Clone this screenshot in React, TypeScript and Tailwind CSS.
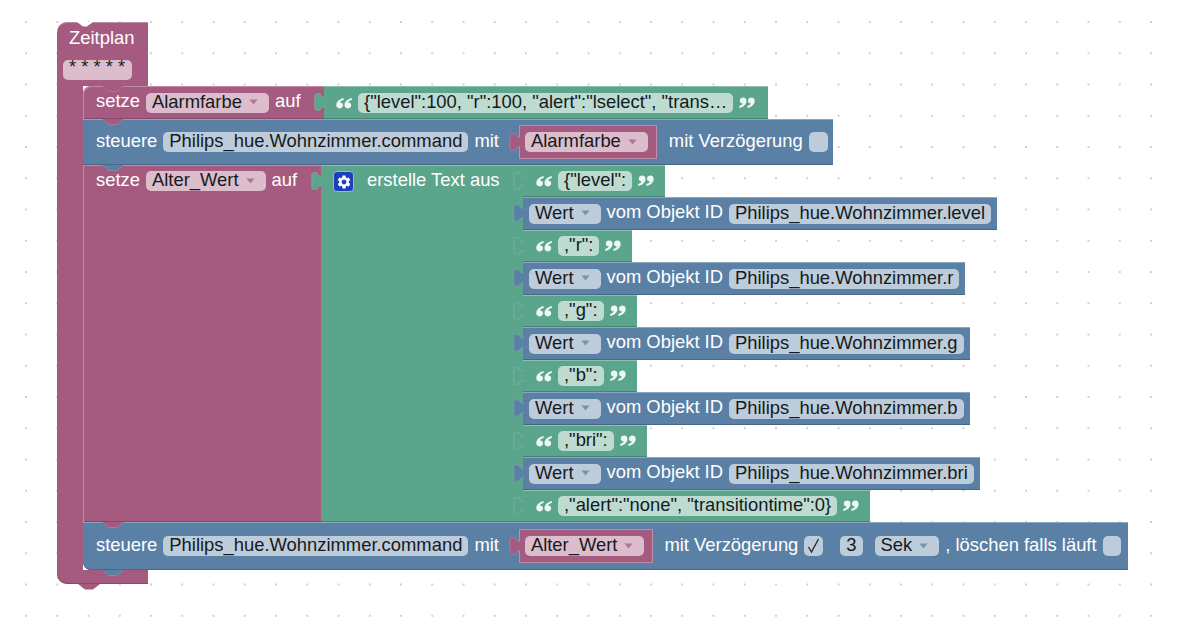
import { MdSettings } from "react-icons/md";
import type { ReactNode } from "react";

type Tone = "pink" | "blue" | "green";
const hex: Record<Tone, { fill: string; light: string; dark: string }> = {
  pink: { fill: "#a55b80", light: "#c08ca6", dark: "#844966" },
  blue: { fill: "#5b80a5", light: "#8ca6c0", dark: "#496684" },
  green: { fill: "#5ba58c", light: "#8cc0af", dark: "#498470" },
};
const blockClass: Record<Tone, string> = {
  pink: "bg-[#a55b80] shadow-[inset_1px_1px_0_#c08ca6,inset_0_-1px_0_#844966]",
  blue: "bg-[#5b80a5] shadow-[inset_0_1px_0_#8ca6c0,inset_0_-1px_0_#496684]",
  green: "bg-[#5ba58c] shadow-[inset_0_1px_0_#8cc0af,inset_0_-1px_0_#498470]",
};
const fieldClass: Record<Tone, string> = {
  pink: "bg-[#dbbdcc]",
  blue: "bg-[#bdccdb]",
  green: "bg-[#bddbd1]",
};

function Field({
  tone,
  arrow,
  children,
  className = "",
}: {
  tone: Tone;
  arrow?: boolean;
  children?: ReactNode;
  className?: string;
}) {
  return (
    <span
      className={`flex h-[20px] shrink-0 items-center whitespace-pre rounded-[5px] pb-[1px] pl-[6px] pr-[6px] text-[#151a20] ${fieldClass[tone]} ${className}`}
    >
      {children}
      {arrow && (
        <svg width="9" height="6" viewBox="0 0 9 6" className="ml-[7px] mr-[5px]">
          <path d="M0.5 0.5H8.5L4.5 5.5Z" fill={hex[tone].fill} opacity="0.75" />
        </svg>
      )}
    </span>
  );
}

function Label({ children, className = "" }: { children: ReactNode; className?: string }) {
  return <span className={`shrink-0 whitespace-pre pb-[2px] text-white ${className}`}>{children}</span>;
}

function Notch({ tone, className = "" }: { tone: Tone; className?: string }) {
  return (
    <svg
      width="22"
      height="7"
      viewBox="0 0 22 7"
      className={`absolute left-[19px] top-0 z-10 ${className}`}
    >
      <path d="M0 0 L7 5.5 H15 L22 0 Z" fill={hex[tone].fill} />
      <path d="M1 0.5 L7 5.5 H15 L21 0.5" fill="none" stroke={hex[tone].light} strokeWidth="0.8" opacity="0.6" />
    </svg>
  );
}

function Tab({ tone, className = "" }: { tone: Tone; className?: string }) {
  return (
    <svg
      width="11"
      height="18"
      viewBox="0 0 11 18"
      className={`absolute left-[-10px] z-10 ${className}`}
    >
      <path
        d="M11 4.5 C8.5 4.5 7 3.5 6 0.8 H2.5 C1.2 0.8 0.8 1.6 0.8 2.6 V15.4 C0.8 16.4 1.2 17.2 2.5 17.2 H6 C7 14.5 8.5 13.5 11 13.5 Z"
        fill={hex[tone].fill}
        stroke={hex[tone].light}
        strokeWidth="0.7"
        strokeOpacity="0.7"
      />
      <rect x="9.5" y="4.9" width="1.5" height="8.2" fill={hex[tone].fill} />
    </svg>
  );
}

const QUOTE =
  "M7.4 1 C3 2.1 0.3 5 0.3 8.1 C0.3 10.2 1.8 11.4 3.6 11.4 C5.4 11.4 7 10.2 7 8.2 C7 6.4 5.6 5.4 4.1 5.4 C4.4 4.2 5.8 3.4 7.8 3 Z M15.6 1 C11.2 2.1 8.5 5 8.5 8.1 C8.5 10.2 10 11.4 11.8 11.4 C13.6 11.4 15.2 10.2 15.2 8.2 C15.2 6.4 13.8 5.4 12.3 5.4 C12.6 4.2 14 3.4 16 3 Z";

function Quote({ close, className = "" }: { close?: boolean; className?: string }) {
  return (
    <svg
      width="16"
      height="12"
      viewBox="0 0 16 12"
      className={`shrink-0 ${close ? "rotate-180" : ""} ${className}`}
    >
      <path d={QUOTE} fill="#eef7f3" />
    </svg>
  );
}

function TextPiece({ text, className = "" }: { text: string; className?: string }) {
  return (
    <div className={`relative flex h-[32px] w-fit items-center pl-[13px] pr-[11px] ${blockClass.green} ${className}`}>
      <Tab tone="green" className="top-[7px]" />
      <Quote className="mr-[6px]" />
      <Field tone="green">{text}</Field>
      <Quote close className="ml-[6px]" />
    </div>
  );
}

function WertPiece({ id }: { id: string }) {
  return (
    <div className={`relative flex h-[33px] w-fit items-center gap-[6px] pl-[6px] pr-[6px] ${blockClass.blue}`}>
      <Tab tone="blue" className="top-[7px]" />
      <Field tone="blue" arrow>
        Wert
      </Field>
      <Label>vom Objekt ID</Label>
      <Field tone="blue">{id}</Field>
    </div>
  );
}

function VarSlot({ name }: { name: string }) {
  return (
    <div className="relative ml-[14px] flex h-[34px] shrink-0 items-center border border-[#c08ca6] bg-[#a55b80] pl-[5px] pr-[8px]">
      <Tab tone="pink" className="left-[-11px] top-[7px]" />
      <Field tone="pink" arrow>
        {name}
      </Field>
    </div>
  );
}

function Steuere({ notch, height, rounded, children }: { notch: Tone; height: string; rounded?: boolean; children: ReactNode }) {
  return (
    <div
      className={`relative flex w-fit items-center gap-[6px] pl-[13px] ${height} ${blockClass.blue} ${rounded ? "rounded-bl-[8px]" : ""}`}
    >
      <Notch tone={notch} />
      <Label>steuere</Label>
      <Field tone="blue">Philips_hue.Wohnzimmer.command</Field>
      <Label>mit</Label>
      {children}
    </div>
  );
}

export default function App() {
  return (
    <div className="relative h-[626px] w-[1177px] overflow-hidden bg-white bg-[radial-gradient(circle,#cfcfcf_1px,transparent_1.4px)] bg-[length:31.25px_31.25px] bg-[position:10.4px_6.4px] pl-[57px] pt-[22px] font-['Liberation_Sans',Arial,sans-serif] text-[18.4px] leading-none">
      <div className="flex w-fit flex-col">
        {/* Hat */}
        <div className="relative flex h-[64px] w-[91px] flex-col rounded-tl-[10px] bg-[#a55b80] pl-[6px] pt-[7px] shadow-[inset_0_1px_0_#c08ca6]">
          <svg width="16" height="5" viewBox="0 0 16 5" className="absolute left-[20px] top-0">
            <path d="M0 0 L6 4.5 H10 L16 0 Z" fill="#ffffff" />
          </svg>
          <Label className="ml-[6px] h-[18px] pb-0">Zeitplan</Label>
          <Field tone="pink" className="mt-[13px] w-[69px] items-start !pb-0 leading-[14px] text-[#222]">
            * * * * *
          </Field>
        </div>

        <div className="flex">
          <div className="w-[26px] bg-[#a55b80]" />
          <div className="flex flex-col">
            {/* setze Alarmfarbe */}
            <div className="flex h-[33px] w-fit">
              <div className={`relative flex w-[241px] items-center gap-[6px] rounded-tl-[8px] pl-[13px] ${blockClass.pink}`}>
                <Notch tone="pink" />
                <Label>setze</Label>
                <Field tone="pink" arrow>
                  Alarmfarbe
                </Field>
                <Label>auf</Label>
              </div>
              <div className={`relative flex items-center pl-[12px] pr-[13px] ${blockClass.green}`}>
                <Tab tone="green" className="top-[7px]" />
                <Quote className="mr-[6px]" />
                <Field tone="green">{'{"level":100, "r":100, "alert":"lselect", "trans…'}</Field>
                <Quote close className="ml-[6px]" />
              </div>
            </div>

            {/* steuere 1 */}
            <Steuere notch="pink" height="h-[46px]">
              <VarSlot name="Alarmfarbe" />
              <Label className="ml-[6px]">mit Verzögerung</Label>
              <Field tone="blue" className="mr-[5px] w-[19px]" />
            </Steuere>

            {/* setze Alter_Wert */}
            <div className="flex w-fit">
              <div className={`relative flex h-[357px] w-[238px] items-start gap-[6px] pl-[13px] pt-[6px] ${blockClass.pink}`}>
                <Notch tone="blue" />
                <Label className="leading-[18px]">setze</Label>
                <Field tone="pink" arrow>
                  Alter_Wert
                </Field>
                <Label className="leading-[18px]">auf</Label>
                <Tab tone="green" className="left-[228px] top-[7px]" />
              </div>
              <div className={`flex w-[202px] items-start pl-[12px] pt-[6px] ${blockClass.green}`}>
                <span className="flex size-[21px] items-center justify-center rounded-[4px] border border-[#9db4ea] bg-[#1d3fb8]">
                  <MdSettings size={16} color="#ffffff" />
                </span>
                <Label className="ml-[13px] leading-[18px]">erstelle Text aus</Label>
              </div>
              <div className="flex flex-col">
                <TextPiece text={'{"level":'} />
                <WertPiece id="Philips_hue.Wohnzimmer.level" />
                <TextPiece text={',"r":'} />
                <WertPiece id="Philips_hue.Wohnzimmer.r" />
                <TextPiece text={',"g":'} />
                <WertPiece id="Philips_hue.Wohnzimmer.g" />
                <TextPiece text={',"b":'} />
                <WertPiece id="Philips_hue.Wohnzimmer.b" />
                <TextPiece text={',"bri":'} />
                <WertPiece id="Philips_hue.Wohnzimmer.bri" />
                <TextPiece text={',"alert":"none", "transitiontime":0}'} />
              </div>
            </div>

            {/* steuere 2 */}
            <div className="w-fit bg-white">
              <Steuere notch="pink" height="h-[48px]" rounded>
                <VarSlot name="Alter_Wert" />
                <Label className="ml-[5px]">mit Verzögerung</Label>
                <Field tone="blue" className="w-[19px] justify-center !px-0">
                  <svg width="13" height="15" viewBox="0 0 13 15">
                    <path d="M1.5 9 L4.5 14 L11.5 1" fill="none" stroke="#20262c" strokeWidth="1.3" />
                  </svg>
                </Field>
                <Field tone="blue" className="ml-[11px]">
                  3
                </Field>
                <Field tone="blue" arrow className="ml-[6px]">
                  Sek
                </Field>
                <Label>, löschen falls läuft</Label>
                <Field tone="blue" className="mr-[7px] w-[18px]" />
              </Steuere>
            </div>
          </div>
        </div>

        {/* Bottom bar */}
        <div className="relative h-[14px] w-[91px] rounded-bl-[10px] bg-[#a55b80] shadow-[inset_0_-1px_0_#844966]">
          <Notch tone="blue" className="left-[45px]" />
          <svg width="22" height="6" viewBox="0 0 22 6" className="absolute left-[21px] top-[14px]">
            <path d="M0 0 L7 5.5 H15 L22 0 Z" fill="#a55b80" />
          </svg>
        </div>
      </div>
    </div>
  );
}
